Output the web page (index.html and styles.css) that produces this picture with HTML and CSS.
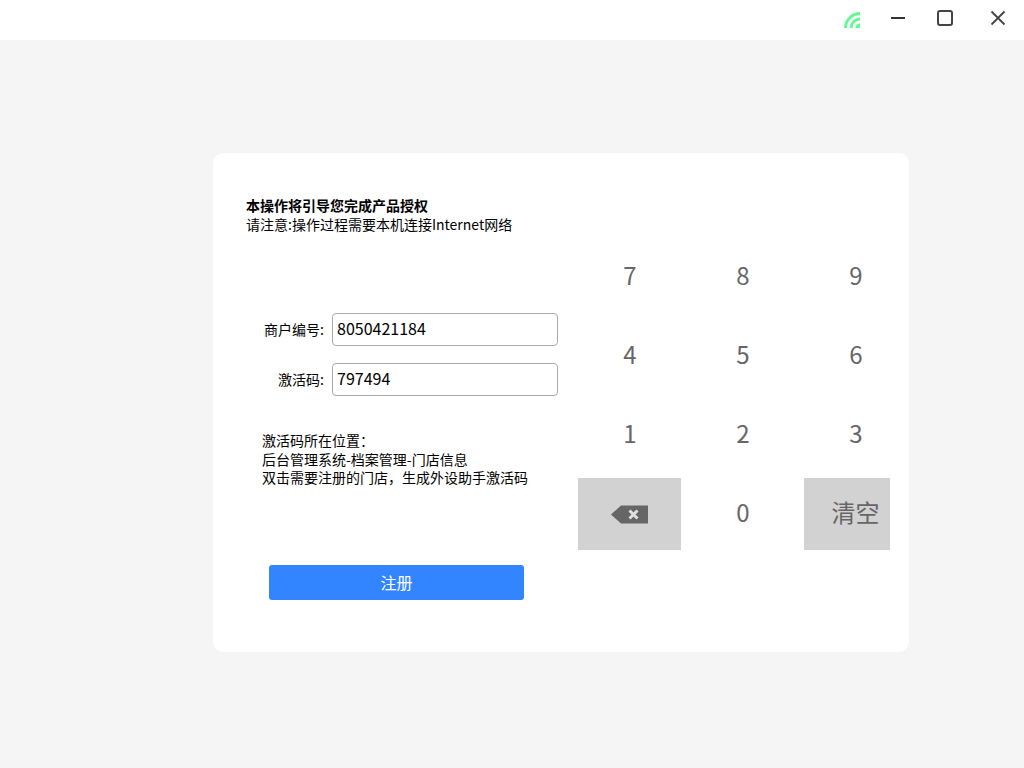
FILE: index.html
```html
<!DOCTYPE html>
<html lang="zh-CN">
<head>
<meta charset="utf-8">
<title>产品授权</title>
<link rel="stylesheet" href="styles.css">
</head>
<body>
<header class="titlebar">
  <svg class="icon wifi" width="16" height="16" viewBox="0 0 16 16"><path d="M1.500 16A14.500 14.500 0 0 1 16 1.500M7 16A9 9 0 0 1 16 7" fill="none" stroke="#5ffb8f" stroke-width="2.800"/><path d="M16 11.500A4.500 4.500 0 0 0 11.500 16H16Z" fill="#5ffb8f"/></svg>
  <svg class="icon min" width="16" height="16" viewBox="0 0 16 16"><path d="M1 8H15" stroke="#333" stroke-width="2"/></svg>
  <svg class="icon max" width="16" height="16" viewBox="0 0 16 16"><rect x="1" y="1" width="14" height="14" rx="2" fill="none" stroke="#444" stroke-width="2"/></svg>
  <svg class="icon close" width="16" height="16" viewBox="0 0 16 16"><path d="M1.500 1.500L14.500 14.500M14.500 1.500L1.500 14.500" stroke="#444" stroke-width="1.800"/></svg>
</header>
<main class="stage">
  <section class="card">
    <div class="left">
      <div class="intro">
        <p class="intro-title">本操作将引导您完成产品授权</p>
        <p class="intro-note">请注意:操作过程需要本机连接Internet网络</p>
      </div>
      <div class="form">
        <div class="row"><label class="label">商户编号:</label><div class="input">8050421184</div></div>
        <div class="row"><label class="label">激活码:</label><div class="input">797494</div></div>
      </div>
      <div class="help">
        <p>激活码所在位置：</p>
        <p>后台管理系统-档案管理-门店信息</p>
        <p>双击需要注册的门店，生成外设助手激活码</p>
      </div>
      <button class="submit">注册</button>
    </div>
    <div class="keypad">
      <div class="key">7</div><div class="key">8</div><div class="key">9</div>
      <div class="key">4</div><div class="key">5</div><div class="key">6</div>
      <div class="key">1</div><div class="key">2</div><div class="key">3</div>
      <div class="key key-back"><svg width="37" height="19" viewBox="0 0 37 19"><path d="M0 9.500L10 0.500H37V18.500H10Z" fill="#666"/><path d="M18.500 5.500L26.500 13.500M26.500 5.500L18.500 13.500" stroke="#e0e0e0" stroke-width="3"/></svg></div>
      <div class="key">0</div>
      <div class="key key-clear">清空</div>
    </div>
  </section>
</main>
</body>
</html>
```

FILE: styles.css
```css
* { box-sizing: border-box; }
html, body { margin: 0; height: 100%; }
body {
  width: 1024px;
  height: 768px;
  overflow: hidden;
  background: #f5f5f5;
  font-family: "Noto Sans CJK SC", "Noto Sans", sans-serif;
  color: #000;
}
p { margin: 0; }
.titlebar {
  height: 40px;
  background: #fff;
  display: flex;
  align-items: center;
  justify-content: flex-end;
  padding-right: 18px;
}
.icon { display: block; }
.wifi { margin-right: 30px; }
.min { margin-right: 31px; margin-top: -4px; }
.max { margin-right: 37px; margin-top: -4px; }
.close { margin-top: -4px; }
.stage { padding: 113px 0 0 213px; }
.card {
  width: 696px;
  height: 499px;
  background: #fff;
  border-radius: 10px;
  display: flex;
  position: relative;
}
.left { width: 365px; padding: 43px 0 0 33px; flex: none; }
.intro { font-size: 14px; line-height: 19px; }
.intro-title { font-weight: 700; }
.form { margin-top: 79px; }
.row { display: flex; align-items: center; justify-content: flex-end; height: 33px; margin-bottom: 17px; padding-right: 20px; margin-left: -33px; }
.label { font-size: 14px; margin: 0 8px 2px 0; }
.input {
  width: 226px;
  height: 33px;
  border: 1px solid #aaa;
  border-radius: 4px;
  padding-left: 4px;
  font-size: 16px;
  line-height: 29px;
}
.help { margin: 35px 0 0 16px; font-size: 14px; line-height: 18.5px; }
.submit {
  display: block;
  width: 255px;
  height: 35px;
  margin: 78px 0 0 23px;
  padding: 0;
  border: 0;
  border-radius: 3px;
  background: #3385ff;
  color: #fff;
  font: 16px "Noto Sans CJK SC", sans-serif;
}
.keypad {
  flex: none;
  margin-top: 88px;
  display: grid;
  grid-template-columns: repeat(3, 103px);
  grid-auto-rows: 72px;
  column-gap: 10px;
  row-gap: 7px;
  height: 309px;
}
.key {
  display: flex;
  align-items: center;
  justify-content: center;
  font-size: 24px;
  color: #666;
  padding: 0 0 6px 1px;
}
.key-back { background: #d2d2d2; padding: 0; }
.key-clear {
  padding-left: 0;
  background: linear-gradient(#d2d2d2, #d2d2d2) left top / 86px 100% no-repeat;
}
```
